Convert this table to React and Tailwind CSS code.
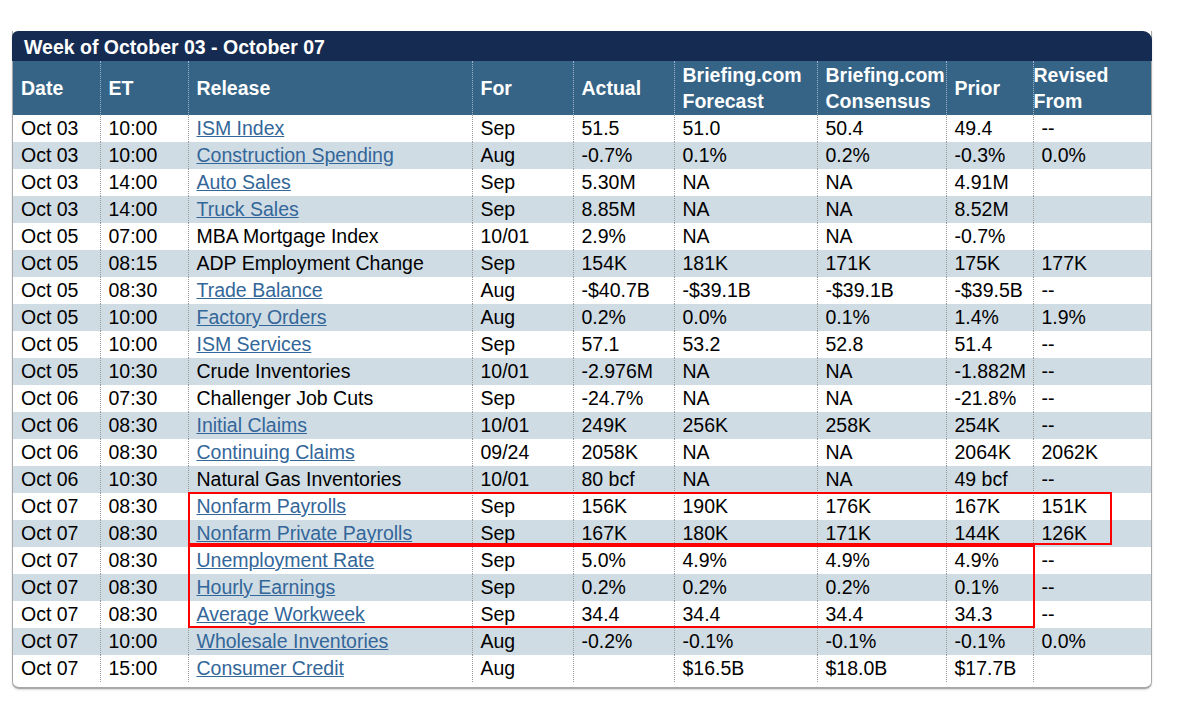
import React from "react";

const rows = [
  ["Oct 03", "10:00", "ISM Index", true, "Sep", "51.5", "51.0", "50.4", "49.4", "--"],
  ["Oct 03", "10:00", "Construction Spending", true, "Aug", "-0.7%", "0.1%", "0.2%", "-0.3%", "0.0%"],
  ["Oct 03", "14:00", "Auto Sales", true, "Sep", "5.30M", "NA", "NA", "4.91M", ""],
  ["Oct 03", "14:00", "Truck Sales", true, "Sep", "8.85M", "NA", "NA", "8.52M", ""],
  ["Oct 05", "07:00", "MBA Mortgage Index", false, "10/01", "2.9%", "NA", "NA", "-0.7%", ""],
  ["Oct 05", "08:15", "ADP Employment Change", false, "Sep", "154K", "181K", "171K", "175K", "177K"],
  ["Oct 05", "08:30", "Trade Balance", true, "Aug", "-$40.7B", "-$39.1B", "-$39.1B", "-$39.5B", "--"],
  ["Oct 05", "10:00", "Factory Orders", true, "Aug", "0.2%", "0.0%", "0.1%", "1.4%", "1.9%"],
  ["Oct 05", "10:00", "ISM Services", true, "Sep", "57.1", "53.2", "52.8", "51.4", "--"],
  ["Oct 05", "10:30", "Crude Inventories", false, "10/01", "-2.976M", "NA", "NA", "-1.882M", "--"],
  ["Oct 06", "07:30", "Challenger Job Cuts", false, "Sep", "-24.7%", "NA", "NA", "-21.8%", "--"],
  ["Oct 06", "08:30", "Initial Claims", true, "10/01", "249K", "256K", "258K", "254K", "--"],
  ["Oct 06", "08:30", "Continuing Claims", true, "09/24", "2058K", "NA", "NA", "2064K", "2062K"],
  ["Oct 06", "10:30", "Natural Gas Inventories", false, "10/01", "80 bcf", "NA", "NA", "49 bcf", "--"],
  ["Oct 07", "08:30", "Nonfarm Payrolls", true, "Sep", "156K", "190K", "176K", "167K", "151K"],
  ["Oct 07", "08:30", "Nonfarm Private Payrolls", true, "Sep", "167K", "180K", "171K", "144K", "126K"],
  ["Oct 07", "08:30", "Unemployment Rate", true, "Sep", "5.0%", "4.9%", "4.9%", "4.9%", "--"],
  ["Oct 07", "08:30", "Hourly Earnings", true, "Sep", "0.2%", "0.2%", "0.2%", "0.1%", "--"],
  ["Oct 07", "08:30", "Average Workweek", true, "Sep", "34.4", "34.4", "34.4", "34.3", "--"],
  ["Oct 07", "10:00", "Wholesale Inventories", true, "Aug", "-0.2%", "-0.1%", "-0.1%", "-0.1%", "0.0%"],
  ["Oct 07", "15:00", "Consumer Credit", true, "Aug", "", "$16.5B", "$18.0B", "$17.7B", ""],
];

const widths = [87, 88, 284, 101, 101, 143, 129, 87, 118];

function App() {
  return (
    <div className="bg-white min-h-screen pt-[31px] pl-[12px]" style={{ fontFamily: '"Liberation Sans", Arial, sans-serif' }}>
      <div className="relative w-[1140px] rounded-b-[7px] border-x border-b-2 border-[#a8a8a8] shadow-[0_1px_2px_rgba(0,0,0,0.15)] pb-[5px]">
        {/* Title bar */}
        <div className="h-[30px] bg-[#152b51] rounded-tl-[6px] rounded-tr-[9px] -mx-px pl-[12px] pt-[4px] flex items-center text-white font-bold text-[19.5px] leading-none">
          Week of October 03 - October 07
        </div>

        <table className="table-fixed border-collapse w-full text-[19.5px] text-black">
          <colgroup>
            {widths.map((w, i) => (
              <col key={i} style={{ width: w }} />
            ))}
          </colgroup>
          <thead>
            <tr className="bg-[#356486] text-white font-bold h-[54px] leading-[26px]">
              <th className="text-left font-bold pl-2 align-middle">Date</th>
              <th className="text-left font-bold pl-2 align-middle border-l border-dotted border-[#9fb3c4]">ET</th>
              <th className="text-left font-bold pl-2 align-middle border-l border-dotted border-[#9fb3c4]">Release</th>
              <th className="text-left font-bold pl-2 align-middle border-l border-dotted border-[#9fb3c4]">For</th>
              <th className="text-left font-bold pl-2 align-middle border-l border-dotted border-[#9fb3c4]">Actual</th>
              <th className="text-left font-bold pl-2 align-middle border-l border-dotted border-[#9fb3c4]">
                Briefing.com<br />Forecast
              </th>
              <th className="text-left font-bold pl-2 align-middle border-l border-dotted border-[#9fb3c4]">
                Briefing.com<br />Consensus
              </th>
              <th className="text-left font-bold pl-2 align-middle border-l border-dotted border-[#9fb3c4]">Prior</th>
              <th className="text-left font-bold pl-0 align-middle border-l border-dotted border-[#9fb3c4]">
                Revised<br />From
              </th>
            </tr>
          </thead>
          <tbody>
            {rows.map((r, i) => (
              <tr key={i} className={`h-[27px] leading-[27px] ${i % 2 === 1 ? "bg-[#d0dce4]" : "bg-white"}`}>
                <td className="pl-2 whitespace-nowrap">{r[0]}</td>
                <td className="pl-2 whitespace-nowrap border-l border-dotted border-[#999]">{r[1]}</td>
                <td className="pl-2 whitespace-nowrap border-l border-dotted border-[#999]">
                  {r[3] ? (
                    <a href="#" className="text-[#336699] underline">{r[2]}</a>
                  ) : (
                    r[2]
                  )}
                </td>
                <td className="pl-2 whitespace-nowrap border-l border-dotted border-[#999]">{r[4]}</td>
                <td className="pl-2 whitespace-nowrap border-l border-dotted border-[#999]">{r[5]}</td>
                <td className="pl-2 whitespace-nowrap border-l border-dotted border-[#999]">{r[6]}</td>
                <td className="pl-2 whitespace-nowrap border-l border-dotted border-[#999]">{r[7]}</td>
                <td className="pl-2 whitespace-nowrap border-l border-dotted border-[#999]">{r[8]}</td>
                <td className="pl-2 whitespace-nowrap border-l border-dotted border-[#999]">{r[9]}</td>
              </tr>
            ))}
          </tbody>
        </table>

        {/* Highlight boxes */}
        <div className="absolute left-[175px] top-[461px] w-[924px] h-[53px] border-2 border-[#ff0000] pointer-events-none" />
        <div className="absolute left-[175px] top-[514px] w-[847px] h-[83px] border-2 border-[#ff0000] pointer-events-none" />
      </div>
    </div>
  );
}

export default App;
